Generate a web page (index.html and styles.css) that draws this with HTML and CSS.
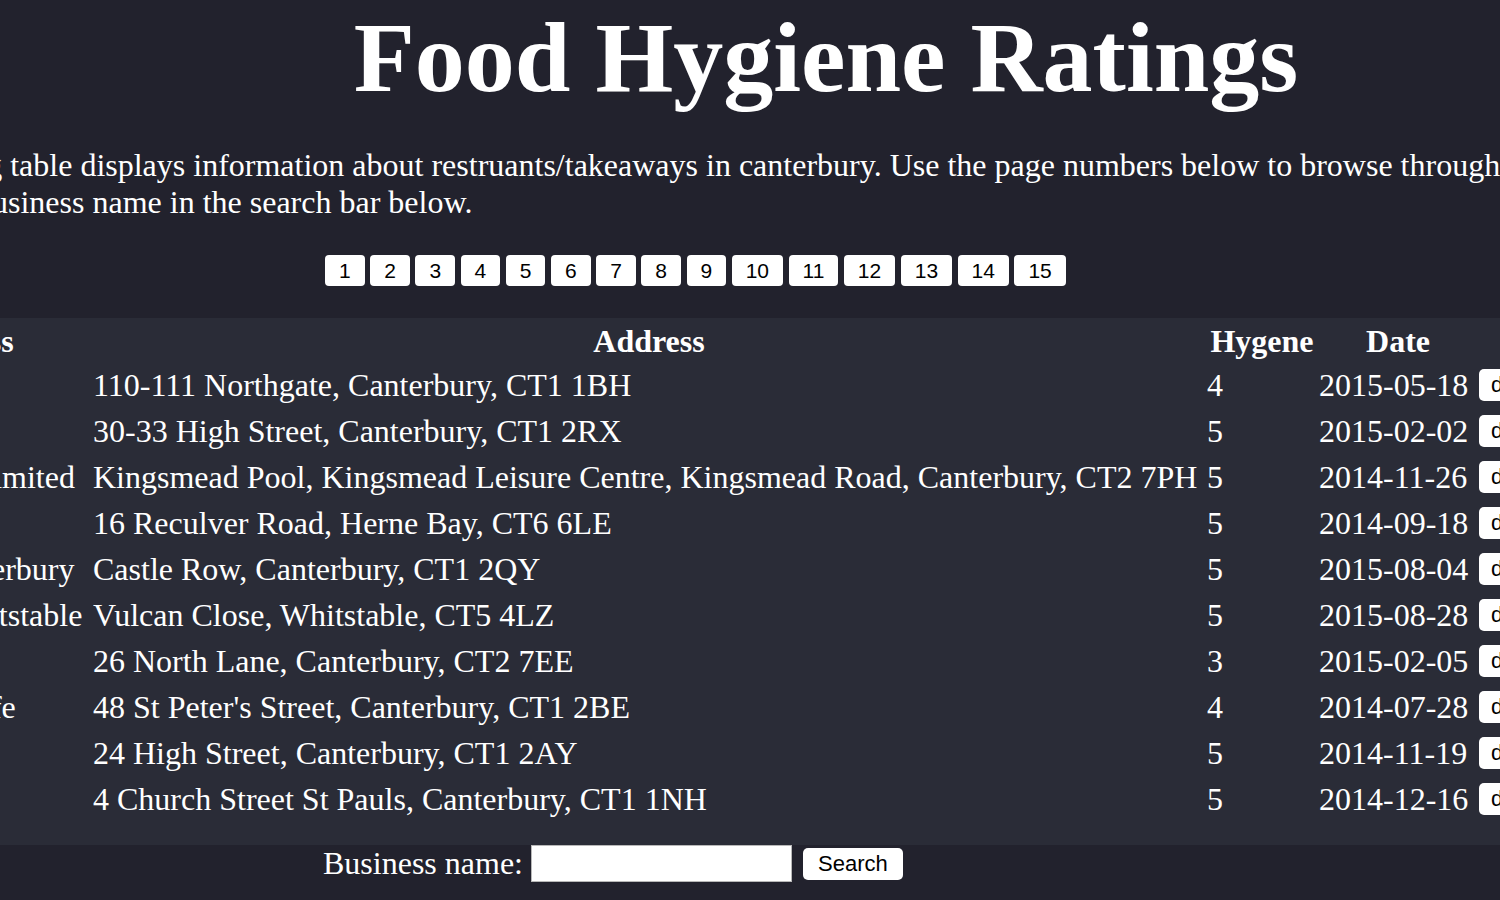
FILE: index.html
```html
<!DOCTYPE html>
<html lang="en">
<head>
<meta charset="utf-8">
<title>Food Hygiene Ratings</title>
<link rel="stylesheet" href="styles.css">
</head>
<body>
<main class="page">
  <h1 class="title">Food Hygiene Ratings</h1>
  <p class="intro">The following table displays information about restruants/takeaways in canterbury. Use the page numbers below to browse through the table, or type a<br>business name in the search bar below.</p>
  <nav class="pager">
    <button class="page-btn">1</button>
    <button class="page-btn">2</button>
    <button class="page-btn">3</button>
    <button class="page-btn">4</button>
    <button class="page-btn">5</button>
    <button class="page-btn">6</button>
    <button class="page-btn">7</button>
    <button class="page-btn">8</button>
    <button class="page-btn">9</button>
    <button class="page-btn">10</button>
    <button class="page-btn">11</button>
    <button class="page-btn">12</button>
    <button class="page-btn">13</button>
    <button class="page-btn">14</button>
    <button class="page-btn">15</button>
  </nav>
  <section class="results">
    <table class="ratings">
      <colgroup>
        <col class="col-name">
        <col class="col-address">
        <col class="col-hygene">
        <col class="col-date">
        <col class="col-action">
      </colgroup>
      <thead>
        <tr><th>Business</th><th>Address</th><th>Hygene</th><th>Date</th><th></th></tr>
      </thead>
      <tbody>
        <tr><td>Ask Italian</td><td>110-111 Northgate, Canterbury, CT1 1BH</td><td>4</td><td>2015-05-18</td><td><button class="row-btn">details</button></td></tr>
        <tr><td>Pizza Hut</td><td>30-33 High Street, Canterbury, CT1 2RX</td><td>5</td><td>2015-02-02</td><td><button class="row-btn">details</button></td></tr>
        <tr><td>Active Life Limited</td><td>Kingsmead Pool, Kingsmead Leisure Centre, Kingsmead Road, Canterbury, CT2 7PH</td><td>5</td><td>2014-11-26</td><td><button class="row-btn">details</button></td></tr>
        <tr><td>Bay Fish Bar</td><td>16 Reculver Road, Herne Bay, CT6 6LE</td><td>5</td><td>2014-09-18</td><td><button class="row-btn">details</button></td></tr>
        <tr><td>Nando's Canterbury</td><td>Castle Row, Canterbury, CT1 2QY</td><td>5</td><td>2015-08-04</td><td><button class="row-btn">details</button></td></tr>
        <tr><td>Dominos Whitstable</td><td>Vulcan Close, Whitstable, CT5 4LZ</td><td>5</td><td>2015-08-28</td><td><button class="row-btn">details</button></td></tr>
        <tr><td>Kebab House</td><td>26 North Lane, Canterbury, CT2 7EE</td><td>3</td><td>2015-02-05</td><td><button class="row-btn">details</button></td></tr>
        <tr><td>Bramley's Cafe</td><td>48 St Peter's Street, Canterbury, CT1 2BE</td><td>4</td><td>2014-07-28</td><td><button class="row-btn">details</button></td></tr>
        <tr><td>Costa Coffee</td><td>24 High Street, Canterbury, CT1 2AY</td><td>5</td><td>2014-11-19</td><td><button class="row-btn">details</button></td></tr>
        <tr><td>The Parrot</td><td>4 Church Street St Pauls, Canterbury, CT1 1NH</td><td>5</td><td>2014-12-16</td><td><button class="row-btn">details</button></td></tr>
      </tbody>
    </table>
  </section>
  <form class="search">
    <label class="search-label" for="bname">Business name:</label>
    <input class="search-input" id="bname" type="text">
    <button class="search-btn" type="button">Search</button>
  </form>
</main>
</body>
</html>
```

FILE: styles.css
```css
html {
  background: #22222d;
}

body {
  margin: 0;
  width: 1500px;
  height: 900px;
  overflow: hidden;
  color: #ffffff;
  font-family: "Liberation Serif", "Times New Roman", serif;
}

.title {
  margin: 0;
  padding-left: 152px;
  text-align: center;
  font-size: 100px;
  font-weight: bold;
  line-height: normal;
}

.intro {
  margin: 32px 0 34px -24px;
  font-size: 32px;
  line-height: normal;
  white-space: nowrap;
  text-indent: -156px;
}

.pager {
  display: flex;
  gap: 5.5px;
  padding-left: 325px;
}

.page-btn {
  height: 31px;
  padding: 0 14px;
  border: 0;
  border-radius: 4px;
  background: #ffffff;
  color: #000000;
  font-family: "Liberation Sans", Arial, sans-serif;
  font-size: 21px;
  line-height: 31px;
}

.results {
  margin-top: 32px;
  padding: 1px 0 22px;
  background: #2a2c37;
}

.ratings {
  table-layout: fixed;
  width: 1764px;
  margin-left: -183px;
  border-spacing: 2px;
}

.col-name { width: 272px; }
.col-address { width: 1112px; }
.col-hygene { width: 110px; }
.col-date { width: 158px; }
.col-action { width: 100px; }

.ratings th,
.ratings td {
  height: 36px;
  padding: 4px 0;
  font-size: 32px;
  line-height: 36px;
  text-align: left;
  white-space: nowrap;
  overflow: hidden;
}

.ratings th {
  height: 36px;
  padding: 2px 0;
  text-align: center;
  font-weight: bold;
}

.row-btn {
  height: 32px;
  margin-top: 2px;
  padding: 0 12px;
  border: 0;
  border-radius: 5px;
  background: #ffffff;
  color: #000000;
  font-family: "Liberation Sans", Arial, sans-serif;
  font-size: 22px;
  line-height: 32px;
  vertical-align: top;
}

.search {
  display: flex;
  align-items: center;
  margin: 0;
  padding-left: 323px;
  height: 37px;
}

.search-label {
  font-size: 32px;
  line-height: normal;
}

.search-input {
  box-sizing: border-box;
  width: 261px;
  height: 37px;
  margin: 0 0 0 8px;
  border: 1px solid #b8b8b8;
  background: #ffffff;
  font-size: 20px;
}

.search-btn {
  height: 32px;
  margin-left: 11px;
  padding: 0 15px;
  border: 0;
  border-radius: 5px;
  background: #ffffff;
  color: #000000;
  font-family: "Liberation Sans", Arial, sans-serif;
  font-size: 22px;
}
```
